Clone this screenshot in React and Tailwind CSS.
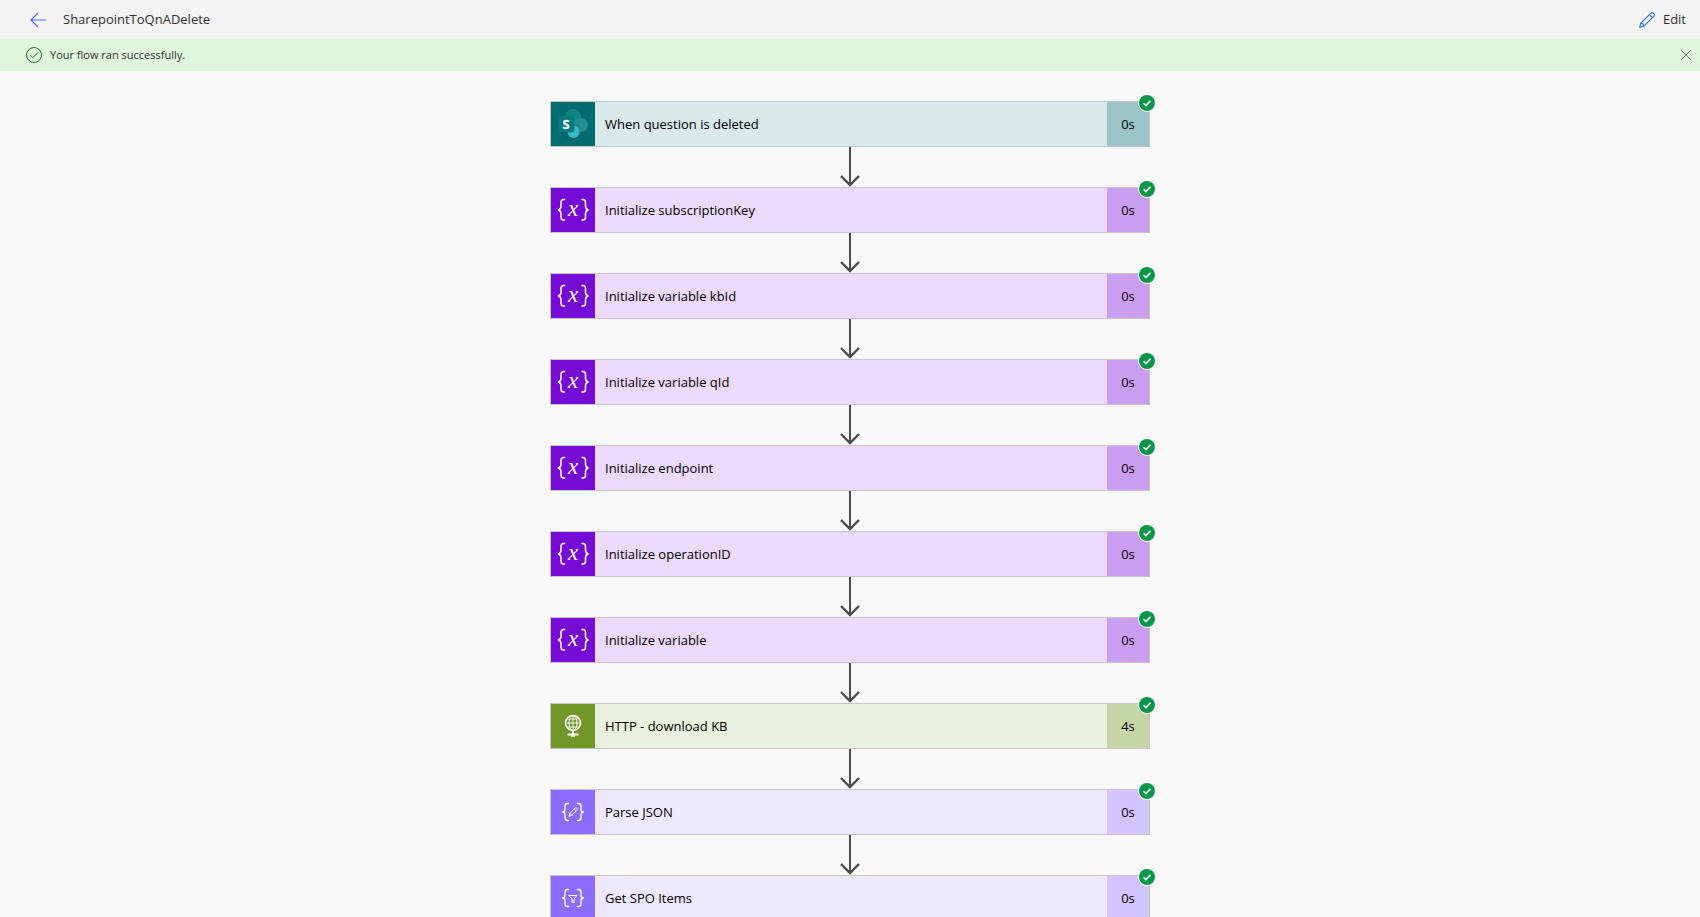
import React from "react";

const BRACES = {
  left: "M17.500 13.500h-1.200c-1.600 0-2.300.9-2.300 2.400v3.400c0 1.700-.8 2.700-2.500 2.700 1.700 0 2.500 1 2.500 2.700v3.400c0 1.500.7 2.400 2.300 2.400h1.200",
  right: "M26.500 13.500h1.200c1.600 0 2.300.9 2.300 2.400v3.400c0 1.700.8 2.700 2.500 2.700-1.700 0-2.500 1-2.500 2.700v3.400c0 1.500-.7 2.400-2.300 2.400h-1.200",
};

function SharePointIcon() {
  return (
    <svg viewBox="0 0 44 44" className="size-11" aria-hidden="true">
      <circle cx="22" cy="22" r="15" fill="#02595c" opacity=".25" />
      <circle cx="22" cy="15" r="8" fill="#128489" />
      <circle cx="30" cy="23" r="7" fill="#248f95" />
      <circle cx="22.500" cy="30" r="6" fill="#30bcc8" />
      <path d="M9 15h13a1.500 1.500 0 0 1 1.500 1.500V29a1.500 1.500 0 0 1-1.500 1.500H9z" fill="#035357" opacity=".5" />
      <rect x="7" y="14" width="16" height="16" rx="1.500" fill="#057a7e" />
      <text x="15" y="26.500" textAnchor="middle" fill="#fff" stroke="#fff" strokeWidth=".3" fontSize="13" fontWeight="700" fontFamily="Open Sans, sans-serif">S</text>
    </svg>
  );
}

function VariableIcon() {
  return (
    <svg viewBox="0 0 44 44" className="size-11" fill="none" stroke="#fff" strokeLinecap="round" aria-hidden="true">
      <path strokeWidth="1.500" d="M13.500 11.500h-.8c-1.900 0-2.700 1-2.700 2.800v4c0 2-.9 3.400-3 3.700 2.100.3 3 1.700 3 3.700v3.500c0 1.800.8 2.800 2.700 2.800h.8M31 11.500h.8c1.900 0 2.700 1 2.700 2.800v4c0 2 .9 3.400 3 3.700-2.100.3-3 1.700-3 3.700v3.500c0 1.800-.8 2.800-2.700 2.800H31" />
      <text x="22" y="28" textAnchor="middle" fill="#fff" stroke="none" fontSize="23" fontStyle="italic" fontFamily="Liberation Serif, serif">x</text>
    </svg>
  );
}

function HttpIcon() {
  return (
    <svg viewBox="0 0 44 44" className="size-11" fill="none" stroke="#fff" aria-hidden="true">
      <circle cx="22" cy="19" r="7.500" strokeWidth="1.500" />
      <ellipse cx="22" cy="19" rx="4" ry="7.500" />
      <path d="M22 11.500v15M14.500 19h15M16 15h12M16 23h12" opacity=".85" />
      <path strokeWidth="2" d="M22 26.500v3M16.500 30.500h11" />
      <path strokeWidth="1.500" d="M20 32h4" />
    </svg>
  );
}

function ParseIcon() {
  return (
    <svg viewBox="0 0 44 44" className="size-11" fill="none" stroke="#fff" strokeLinecap="round" strokeLinejoin="round" aria-hidden="true">
      <path strokeWidth="1.300" d={BRACES.left} />
      <path strokeWidth="1.300" d={BRACES.right} />
      <path strokeWidth=".9" d="M18 26l.8-2.800 5.400-5.200c1.200-1 3 .7 2 1.900l-5.400 5.300zM23.300 19l1.900 1.900M18.800 23.300l1.900 1.900" />
    </svg>
  );
}

function FilterIcon() {
  return (
    <svg viewBox="0 0 44 44" className="size-11" fill="none" stroke="#fff" strokeLinecap="round" strokeLinejoin="round" aria-hidden="true">
      <path strokeWidth="1.300" d={BRACES.left} />
      <path strokeWidth="1.300" d={BRACES.right} />
      <path d="M18 19.500h8l-3 3.700v3.300h-2v-3.300z" />
    </svg>
  );
}

const KINDS = {
  sharepoint: { Icon: SharePointIcon, icon: "bg-[#036c70]", body: "bg-[#d9e8e8]", time: "bg-[#9ac4c6]" },
  variable: { Icon: VariableIcon, icon: "bg-[#770bd6]", body: "bg-[#ebdafa]", time: "bg-[#c99def]" },
  http: { Icon: HttpIcon, icon: "bg-[#709727]", body: "bg-[#e9f0de]", time: "bg-[#c6d5a8]" },
  parse: { Icon: ParseIcon, icon: "bg-[#8c6cff]", body: "bg-[#eee8ff]", time: "bg-[#d1c4ff]" },
  filter: { Icon: FilterIcon, icon: "bg-[#8c6cff]", body: "bg-[#eee8ff]", time: "bg-[#d1c4ff]" },
};

const STEPS = [
  { kind: "sharepoint", title: "When question is deleted", time: "0s" },
  { kind: "variable", title: "Initialize subscriptionKey", time: "0s" },
  { kind: "variable", title: "Initialize variable kbId", time: "0s" },
  { kind: "variable", title: "Initialize variable qId", time: "0s" },
  { kind: "variable", title: "Initialize endpoint", time: "0s" },
  { kind: "variable", title: "Initialize operationID", time: "0s" },
  { kind: "variable", title: "Initialize variable", time: "0s" },
  { kind: "http", title: "HTTP - download KB", time: "4s" },
  { kind: "parse", title: "Parse JSON", time: "0s" },
  { kind: "filter", title: "Get SPO Items", time: "0s" },
];

function Arrow() {
  return (
    <svg viewBox="0 0 20 40" className="mx-auto h-10 w-5" fill="none" stroke="#4c4c4c" strokeWidth="2" aria-hidden="true">
      <path d="M10 0v39" />
      <path strokeWidth="2.400" d="M1 29l9 9 9-9" />
    </svg>
  );
}

function StepCard({ step }) {
  const { Icon, icon, body, time } = KINDS[step.kind];
  return (
    <button type="button" className="relative flex w-full border border-[#c8c6c4] text-left text-[13px] text-black">
      <span className={`size-11 shrink-0 ${icon}`}>
        <Icon />
      </span>
      <span className={`flex flex-1 items-center px-2.5 pt-0.5 ${body}`}>{step.title}</span>
      <span className={`flex w-[42px] shrink-0 items-center justify-center pt-0.5 ${time}`}>{step.time}</span>
      <svg viewBox="0 0 18 18" className="absolute -top-2 -right-[7px] size-[18px]" aria-hidden="true">
        <circle cx="9" cy="9" r="9" fill="#fff" />
        <circle cx="9" cy="9" r="8" fill="#0a9648" />
        <path d="M5.600 9.300l2.300 2.300 4.600-4.800" fill="none" stroke="#fff" strokeWidth="1.600" />
      </svg>
    </button>
  );
}

export default function App() {
  return (
    <div className="flex h-screen flex-col overflow-hidden bg-[#f8f8f8] font-['Open_Sans',sans-serif] text-[#323130]">
      <header className="flex h-[39px] shrink-0 items-center justify-between bg-[#f3f3f3] pr-3.5 pl-[30px]">
        <div className="flex items-center gap-[17px]">
          <button type="button" aria-label="Back">
            <svg viewBox="0 0 16 16" className="size-4" fill="none" stroke="#4a6cf7" strokeWidth="1.200" aria-hidden="true">
              <path d="M16 8H1M8 1L1 8l7 7" />
            </svg>
          </button>
          <h1 className="text-[13px]">SharepointToQnADelete</h1>
        </div>
        <button type="button" className="flex items-center gap-2 text-[13px]">
          <svg viewBox="0 0 16 16" className="size-4" fill="none" stroke="#2f6bff" strokeWidth="1.100" strokeLinejoin="round" aria-hidden="true">
            <path d="M.7 15.300l1.100-4.200L11.700 1.300c1.900-1.800 4.800 1 3 3L4.900 14.200zM10.300 2.700l3 3M1.800 11.100c1.600.2 2.800 1.400 3.100 3.100" />
          </svg>
          Edit
        </button>
      </header>
      <div role="status" className="flex h-8 shrink-0 items-center justify-between bg-[#dff6dd] pr-2 pl-[26px] text-[11px]">
        <div className="flex items-center gap-2">
          <svg viewBox="0 0 16 16" className="size-4" fill="none" stroke="#107c10" aria-hidden="true">
            <circle cx="8" cy="8" r="7.500" />
            <path d="M4.300 8.200l2.500 2.500 5-5" />
          </svg>
          <span>Your flow ran successfully.</span>
        </div>
        <button type="button" aria-label="Dismiss">
          <svg viewBox="0 0 12 12" className="size-3" fill="none" stroke="#7a7876" aria-hidden="true">
            <path d="M1 1l10 10M11 1L1 11" />
          </svg>
        </button>
      </div>
      <main className="min-h-0 flex-1 px-4 pt-[30px]">
        <ol className="mx-auto max-w-[600px]">
          {STEPS.map((step, i) => (
            <li key={step.title}>
              {i > 0 && <Arrow />}
              <StepCard step={step} />
            </li>
          ))}
        </ol>
      </main>
    </div>
  );
}
